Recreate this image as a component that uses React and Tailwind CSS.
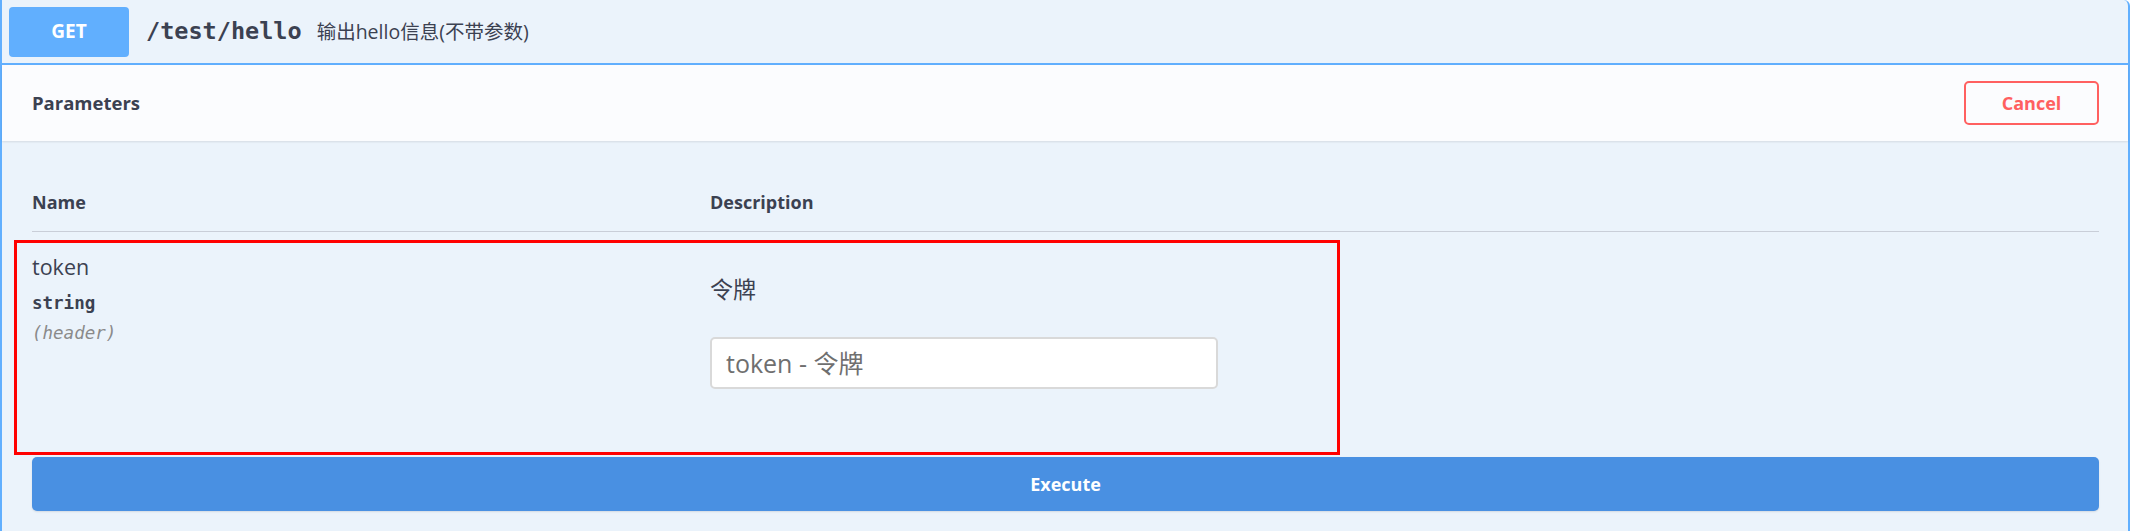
import React, { useState } from "react";

const sans = "font-['Open_Sans','Noto_Sans_CJK_SC',sans-serif]";
const mono = "font-['DejaVu_Sans_Mono','Liberation_Mono',monospace]";

const OperationBlock = () => {
  const [token, setToken] = useState("");

  return (
    <div className={`min-h-[531px] bg-white pr-[4px] ${sans} text-[#3b4151]`}>
      <div className="min-h-[531px] bg-[#ebf3fb] border-x-2 border-[#61affe] rounded-tr-[6px]">
        {/* Summary */}
        <div className="h-[65px] flex items-center pl-[7px] border-b-2 border-[#61affe]">
          <span className="w-[120px] h-[50px] flex items-center justify-center rounded-[4px] bg-[#61affe] text-white text-[19px] font-bold">
            GET
          </span>
          <span className={`ml-[17px] ${mono} font-bold text-[23.5px] text-[#3b4151]`}>
            /test/hello
          </span>
          <span className="ml-[15px] text-[19.5px] text-[#3b4151]">输出hello信息(不带参数)</span>
        </div>

        {/* Section header */}
        <div className="h-[76px] flex items-center justify-between pl-[30px] pr-[29px] bg-[#fbfcfe] shadow-[0_1px_2px_rgba(0,0,0,0.1)]">
          <h4 className="text-[18.5px] font-bold">Parameters</h4>
          <button className="w-[135px] h-[44px] flex items-center justify-center rounded-[5px] border-2 border-[#ff6060] text-[#ff6060] text-[18px] font-bold">
            Cancel
          </button>
        </div>

        {/* Parameter table */}
        <div className="pl-[30px] pr-[29px] pt-[49px]">
          <div className="grid grid-cols-[678px_1fr] pb-[17px] border-b border-[#c9ced8] text-[18px] font-bold leading-[24px]">
            <div>Name</div>
            <div>Description</div>
          </div>

          <div className="relative grid grid-cols-[678px_1fr] pb-[68px]">
            <div className="pt-[21px]">
              <div className="text-[21.5px] leading-[28px]">token</div>
              <div className={`mt-[10px] ${mono} font-bold text-[17.5px] leading-[24px]`}>string</div>
              <div className={`mt-[6px] ${mono} italic text-[17.5px] leading-[24px] text-[#8a8a8a]`}>
                (header)
              </div>
            </div>
            <div className="pt-[41px]">
              <p className="text-[23px] leading-[32px]">令牌</p>
              <input
                value={token}
                onChange={(e) => setToken(e.target.value)}
                placeholder="token - 令牌"
                className="mt-[32px] w-[508px] h-[52px] px-[14px] rounded-[5px] border-2 border-[#d9d9d9] bg-white text-[25px] placeholder:text-[#6f6f6f] outline-none"
              />
            </div>
            {/* annotation box */}
            <div className="absolute left-[-18px] top-[8px] w-[1326px] h-[215px] border-[3px] border-[#ff0000] pointer-events-none" />
          </div>

          <button className="w-full h-[54px] rounded-[5px] bg-[#4990e2] text-white text-[18px] font-bold shadow-[0_1px_2px_rgba(0,0,0,0.1)]">
            Execute
          </button>
        </div>
      </div>
    </div>
  );
};

export default function App() {
  return <OperationBlock />;
}
